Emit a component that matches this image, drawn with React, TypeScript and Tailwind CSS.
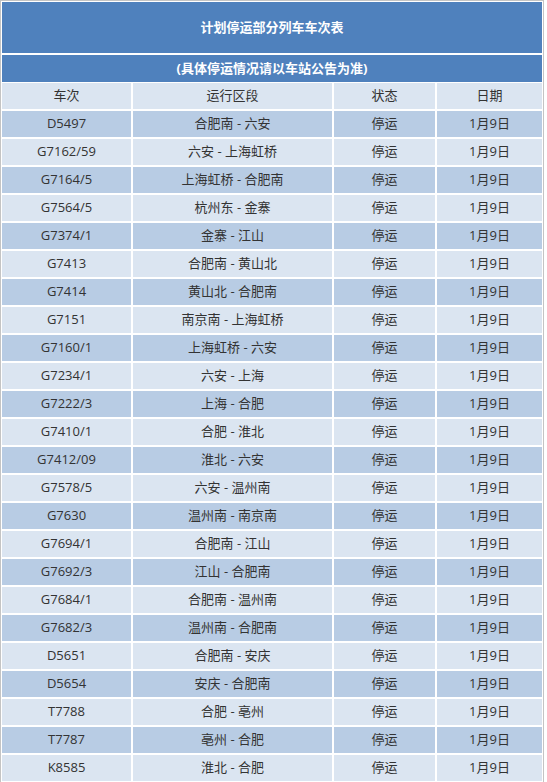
const rows: [string, string][] = [
  ["D5497", "合肥南 - 六安"],
  ["G7162/59", "六安 - 上海虹桥"],
  ["G7164/5", "上海虹桥 - 合肥南"],
  ["G7564/5", "杭州东 - 金寨"],
  ["G7374/1", "金寨 - 江山"],
  ["G7413", "合肥南 - 黄山北"],
  ["G7414", "黄山北 - 合肥南"],
  ["G7151", "南京南 - 上海虹桥"],
  ["G7160/1", "上海虹桥 - 六安"],
  ["G7234/1", "六安 - 上海"],
  ["G7222/3", "上海 - 合肥"],
  ["G7410/1", "合肥 - 淮北"],
  ["G7412/09", "淮北 - 六安"],
  ["G7578/5", "六安 - 温州南"],
  ["G7630", "温州南 - 南京南"],
  ["G7694/1", "合肥南 - 江山"],
  ["G7692/3", "江山 - 合肥南"],
  ["G7684/1", "合肥南 - 温州南"],
  ["G7682/3", "温州南 - 合肥南"],
  ["D5651", "合肥南 - 安庆"],
  ["D5654", "安庆 - 合肥南"],
  ["T7788", "合肥 - 亳州"],
  ["T7787", "亳州 - 合肥"],
  ["K8585", "淮北 - 合肥"],
];

const cols = "grid grid-cols-[129px_199px_101px_105px] gap-x-[2px]";
const cell = "flex items-center justify-center h-[26px]";

export default function App() {
  return (
    <div
      className="w-[544px] h-[782px] overflow-hidden bg-white border-t border-x border-[#c4c4c4] p-[1px] text-[13px] text-[#333]"
      style={{ fontFamily: '"Open Sans", "Noto Sans CJK SC", sans-serif' }}
    >
      <div className="h-[51px] bg-[#4f81bd] flex items-center justify-center text-white font-bold">
        计划停运部分列车车次表
      </div>
      <div className="mt-[2px] h-[27px] bg-[#4f81bd] flex items-center justify-center text-white font-bold">
        (具体停运情况请以车站公告为准)
      </div>
      <div className={`${cols} mt-[1px]`}>
        {["车次", "运行区段", "状态", "日期"].map((h) => (
          <div key={h} className={`${cell} bg-[#dbe5f1]`}>
            {h}
          </div>
        ))}
      </div>
      {rows.map(([no, seg], i) => {
        const bg = i % 2 === 0 ? "bg-[#b8cce4]" : "bg-[#dbe5f1]";
        return (
          <div key={no} className={`${cols} mt-[2px]`}>
            <div className={`${cell} ${bg}`}>{no}</div>
            <div className={`${cell} ${bg}`}>{seg}</div>
            <div className={`${cell} ${bg}`}>停运</div>
            <div className={`${cell} ${bg}`}>1月9日</div>
          </div>
        );
      })}
    </div>
  );
}
